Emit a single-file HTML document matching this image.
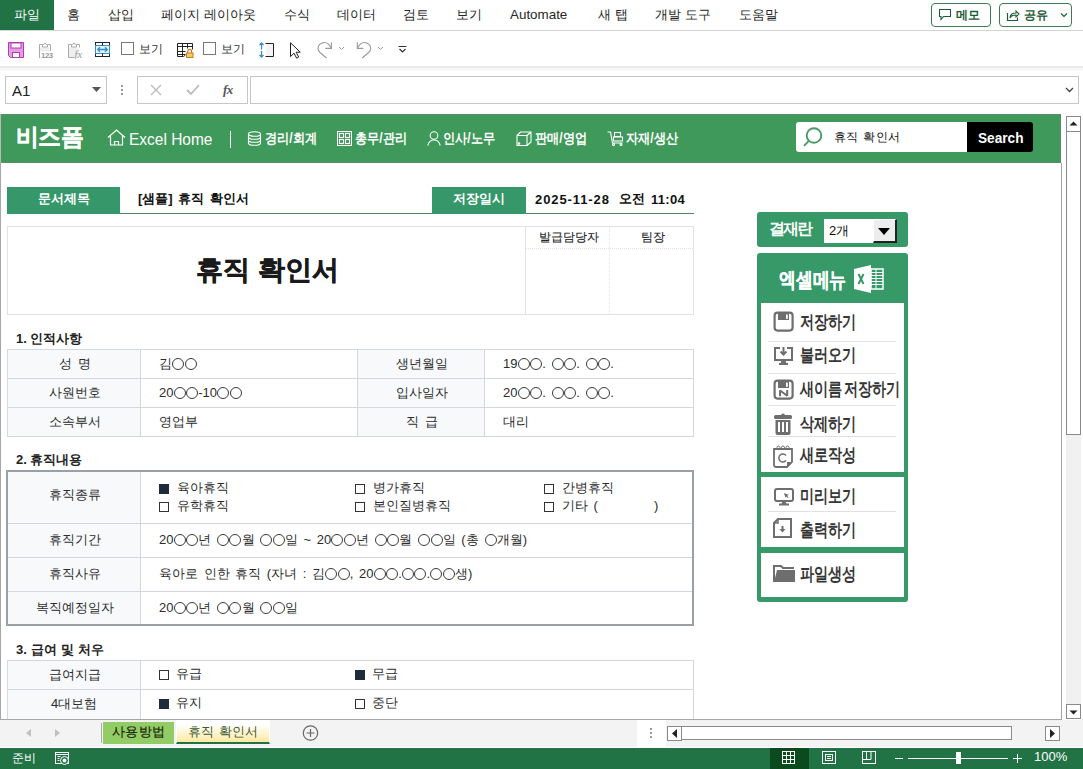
<!DOCTYPE html>
<html><head><meta charset="utf-8">
<style>
*{box-sizing:border-box;margin:0;padding:0}
html,body{width:1083px;height:769px;overflow:hidden;background:#fff;font-family:"Liberation Sans",sans-serif;color:#2b2b2b;position:relative}
.a{position:absolute;white-space:nowrap}
.tab{position:absolute;top:6px;font-size:13.4px;color:#262626;line-height:18px}
.t13{font-size:13px;line-height:16px;word-spacing:2px}
.cb{position:absolute;width:10px;height:10px;border:1px solid #333;background:#fff}
.cbf{position:absolute;width:10px;height:10px;background:#1f2a3a}
.hl{position:absolute;height:1px;background:#d4d8de}
.vl{position:absolute;width:1px;background:#d4d8de}
.lbl{position:absolute;background:#f7f9fb}
.menu{position:absolute;font-size:14px;font-weight:bold;color:#fff;line-height:16px;transform:scaleX(0.87);transform-origin:0 0}
.mi{position:absolute;left:800px;font-size:18px;font-weight:bold;color:#363636;line-height:20px;transform:scaleX(0.785);transform-origin:0 0}
.msep{position:absolute;left:768px;width:128px;height:1px;background:#e0e0e0}
.o{display:inline-block;width:12px;height:12px;border:1px solid #3a3a3a;border-radius:50%;margin:0 0.2px;vertical-align:-1.5px}
</style></head><body>
<!-- ribbon tabs -->
<div class="a" style="left:0;top:0;width:1083px;height:31px;background:#fff;border-bottom:1px solid #d4d4d4"></div>
<div class="a" style="left:0;top:0;width:54px;height:30px;background:#217346"></div>
<div class="tab" style="left:14px;color:#fff">파일</div>
<div class="tab" style="left:67px">홈</div>
<div class="tab" style="left:108px">삽입</div>
<div class="tab" style="left:161px">페이지 레이아웃</div>
<div class="tab" style="left:284px">수식</div>
<div class="tab" style="left:337px">데이터</div>
<div class="tab" style="left:403px">검토</div>
<div class="tab" style="left:456px">보기</div>
<div class="tab" style="left:510px">Automate</div>
<div class="tab" style="left:598px">새 탭</div>
<div class="tab" style="left:655px">개발 도구</div>
<div class="tab" style="left:739px">도움말</div>
<div class="a" style="left:931px;top:3px;width:60px;height:24px;border:1px solid #3c7a52;border-radius:4px"></div>
<div class="a" style="left:999px;top:3px;width:73px;height:24px;border:1px solid #3c7a52;border-radius:4px"></div>
<div class="a" style="left:956px;top:7px;font-size:12px;font-weight:bold;color:#1e5c36;line-height:16px;letter-spacing:0.3px">메모</div>
<div class="a" style="left:1024px;top:7px;font-size:12px;font-weight:bold;color:#1e5c36;line-height:16px;letter-spacing:0.3px">공유</div>
<svg class="a" style="left:939px;top:9px" width="13" height="12" viewBox="0 0 13 12"><path d="M0.5 0.5h11v7h-7l-2.5 3v-3h-1.5z" fill="none" stroke="#1e5c36" stroke-width="1.1"/></svg>
<svg class="a" style="left:1006px;top:8px" width="14" height="14" viewBox="0 0 14 14"><path d="M1.5 5v7.5h10v-3" fill="none" stroke="#1e5c36" stroke-width="1.2"/><path d="M4 10c0-4 3-5 6-5V3l3 3-3 3V7c-3 0-5 1-6 3z" fill="none" stroke="#1e5c36" stroke-width="1.1"/></svg>
<svg class="a" style="left:1060px;top:12px" width="8" height="6" viewBox="0 0 8 6"><path d="M1 1.5l3 3 3-3" fill="none" stroke="#1e5c36" stroke-width="1.2"/></svg>

<!-- QAT -->
<div class="a" style="left:0;top:66px;width:1083px;height:5px;background:linear-gradient(#e4e4e4,#f4f4f4 50%,#fcfcfc)"></div>
<svg class="a" style="left:8px;top:42px" width="16" height="16" viewBox="0 0 16 16"><path d="M0.5 0.5h15v15h-13l-2-2z" fill="#e39de4" stroke="#b23bb3"/><rect x="3" y="1" width="10" height="5" fill="#fff" stroke="#b23bb3"/><rect x="4.5" y="10.5" width="7" height="5" fill="#fff" stroke="#b23bb3"/></svg>
<svg class="a" style="left:38px;top:41px" width="16" height="18" viewBox="0 0 16 18"><rect x="2" y="6.5" width="9.5" height="4" fill="#eee"/><path d="M1.5 17V3.5h3M9.5 3.5h3V10" fill="none" stroke="#aaa"/><path d="M4.5 3.5v2.5h5V3.5H8.3a1.3 1.3 0 0 0-2.6 0z" fill="none" stroke="#aaa"/><text x="3" y="16.8" font-size="7.8" fill="#999" font-family="Liberation Sans" font-weight="bold" letter-spacing="-0.4">123</text></svg>
<svg class="a" style="left:67px;top:41px" width="17" height="18" viewBox="0 0 17 18"><path d="M2 6.5h9.5v10H2z" fill="#eee"/><path d="M1.5 16.5V3.5h3M9.5 3.5h3V6.5M1.5 16.5h6" fill="none" stroke="#aaa"/><path d="M4.5 3.5v2.5h5V3.5H8.3a1.3 1.3 0 0 0-2.6 0z" fill="none" stroke="#aaa"/><text x="7.5" y="16.5" font-size="10.5" font-style="italic" fill="#999" font-family="Liberation Serif">fx</text></svg>
<svg class="a" style="left:95px;top:42px" width="15" height="15" viewBox="0 0 15 15"><rect x="0.5" y="0.5" width="14" height="14" fill="#fff" stroke="#222"/><rect x="0.5" y="3.5" width="14" height="8" fill="#dff4fc" stroke="#3a8cc8"/><path d="M7.5 0.5v3M7.5 11.5v3" stroke="#222"/><path d="M3 7.5h9M5 5.3l-2.2 2.2 2.2 2.2M10 5.3l2.2 2.2-2.2 2.2" stroke="#3a8cc8" stroke-width="1.4" fill="none"/></svg>
<div class="cb" style="left:121px;top:42px;width:13px;height:13px;border-color:#777"></div>
<div class="a" style="left:139px;top:41px;font-size:12px;line-height:16px;color:#333;letter-spacing:0.3px">보기</div>
<svg class="a" style="left:177px;top:43px" width="17" height="15" viewBox="0 0 17 15"><path d="M0.5 13.5V0.5h15v6M0.5 3.5h15M0.5 8.5h8M0.5 11.5h8M0.5 13.5h6l2-1.5M5.5 0.5v13M10.5 0.5v5" fill="none" stroke="#222"/><path d="M10.8 10V8.3a1.9 1.9 0 0 1 3.8 0V10" fill="none" stroke="#c97f1e" stroke-width="1.2"/><rect x="9.5" y="10" width="6.5" height="4.5" fill="#f8c86a" stroke="#c97f1e"/></svg>
<div class="cb" style="left:203px;top:42px;width:13px;height:13px;border-color:#777"></div>
<div class="a" style="left:221px;top:41px;font-size:12px;line-height:16px;color:#333;letter-spacing:0.3px">보기</div>
<svg class="a" style="left:259px;top:42px" width="16" height="16" viewBox="0 0 16 16"><rect x="7" y="2" width="7" height="12" fill="#f4f4f4"/><path d="M6.5 1.5h8v13h-8" fill="none" stroke="#222"/><path d="M2.5 1v6.5M2.5 9v6M0.5 3l2-2 2 2M0.5 13l2 2 2-2" fill="none" stroke="#3a8cc8" stroke-width="1.3"/></svg>
<svg class="a" style="left:289px;top:42px" width="13" height="17" viewBox="0 0 13 17"><path d="M1.5 0.8V14.6L5 11.2l2.6 5 2.1-1.1-2.5-4.9h4.1z" fill="#fff" stroke="#222" stroke-linejoin="miter"/></svg>
<svg class="a" style="left:317px;top:41px" width="17" height="18" viewBox="0 0 17 18" fill="none" stroke="#9a9a9a" stroke-width="1.1"><path d="M14.4 1.3v6.1H8.3"/><path d="M14.4 7.4C12.5 3.5 10 1.5 7.5 1.5 4 1.5 1 4 1 7.5c0 1.5 0.8 2.8 2 4l6.5 5.5"/></svg>
<svg class="a" style="left:338px;top:46px" width="7" height="5" viewBox="0 0 7 5"><path d="M1 1l2.5 2.5L6 1" fill="none" stroke="#999"/></svg>
<svg class="a" style="left:356px;top:41px" width="17" height="18" viewBox="0 0 17 18" fill="none" stroke="#9a9a9a" stroke-width="1.1"><path d="M1.3 1.3v6.1h6.1"/><path d="M1.3 7.4C3.2 3.5 5.7 1.5 8.2 1.5c3.5 0 6.5 2.5 6.5 6 0 1.5-0.8 2.8-2 4L6.2 17"/></svg>
<svg class="a" style="left:377px;top:46px" width="7" height="5" viewBox="0 0 7 5"><path d="M1 1l2.5 2.5L6 1" fill="none" stroke="#999"/></svg>
<svg class="a" style="left:398px;top:46px" width="9" height="7" viewBox="0 0 9 7"><path d="M0.5 0.5h8M1.5 3l3 3 3-3" fill="none" stroke="#333" stroke-width="1.2"/></svg>

<!-- formula bar -->
<div class="a" style="left:5px;top:76px;width:102px;height:28px;border:1px solid #c6c6c6;background:#fff"></div>
<div class="a" style="left:12px;top:82px;font-size:15px;line-height:18px;color:#222">A1</div>
<svg class="a" style="left:92px;top:87px" width="9" height="5" viewBox="0 0 9 5"><path d="M0 0h9L4.5 5z" fill="#555"/></svg>
<div class="a" style="left:121px;top:85px;width:2px;height:2px;background:#999"></div>
<div class="a" style="left:121px;top:89px;width:2px;height:2px;background:#999"></div>
<div class="a" style="left:121px;top:93px;width:2px;height:2px;background:#999"></div>
<div class="a" style="left:137px;top:76px;width:111px;height:28px;border:1px solid #c6c6c6;background:#fff"></div>
<svg class="a" style="left:150px;top:84px" width="12" height="12" viewBox="0 0 12 12"><path d="M1 1l10 10M11 1L1 11" stroke="#bbb" stroke-width="1.3"/></svg>
<svg class="a" style="left:186px;top:84px" width="14" height="12" viewBox="0 0 14 12"><path d="M1 6l4 4 8-9" fill="none" stroke="#bbb" stroke-width="1.8"/></svg>
<div class="a" style="left:223px;top:82px;font-size:13px;font-style:italic;font-weight:bold;font-family:'Liberation Serif',serif;color:#555;line-height:16px;letter-spacing:-0.5px">fx</div>
<div class="a" style="left:250px;top:76px;width:829px;height:28px;border:1px solid #c6c6c6;background:#fff"></div>
<svg class="a" style="left:1065px;top:87px" width="9" height="6" viewBox="0 0 9 6"><path d="M1 1l3.5 3.5L8 1" fill="none" stroke="#444" stroke-width="1.3"/></svg>

<!-- sheet area -->
<div class="a" style="left:0;top:163px;width:1px;height:557px;background:#a6a6a6"></div>
<div class="a" style="left:1061px;top:163px;width:1px;height:557px;background:#a6a6a6"></div>


<!-- header band -->
<div class="a" style="left:1px;top:114px;width:1060px;height:49px;background:#3f995b;border:1px solid #5a8c68"></div><div class="a" style="left:0;top:114px;width:1px;height:49px;background:#9ec8a8"></div>
<div class="a" style="left:16px;top:120px;font-size:24px;font-weight:bold;color:#fff;line-height:34px;letter-spacing:-0.5px;-webkit-text-stroke:0.4px #fff;transform:scaleX(0.95);transform-origin:0 0">비즈폼</div>
<svg class="a" style="left:107px;top:129px" width="19" height="17" viewBox="0 0 19 17" fill="none" stroke="#fff" stroke-width="1.2"><path d="M1 8.5L9.5 1 18 8.5"/><path d="M3.5 6.5v9.5h12V6.5"/><path d="M7.5 16v-3.5h4V16"/></svg>
<div class="a" style="left:129px;top:130px;font-size:17px;color:#fff;line-height:20px;transform:scaleX(0.91);transform-origin:0 0">Excel Home</div>
<div class="a" style="left:230px;top:131px;width:1px;height:17px;background:#fff"></div>
<svg class="a" style="left:247px;top:131px" width="15" height="15" viewBox="0 0 15 15" fill="none" stroke="#fff" stroke-width="1.1"><ellipse cx="7.5" cy="3" rx="6" ry="2.3"/><path d="M1.5 3v9c0 1.3 2.7 2.3 6 2.3s6-1 6-2.3V3M1.5 6c0 1.3 2.7 2.3 6 2.3s6-1 6-2.3M1.5 9c0 1.3 2.7 2.3 6 2.3s6-1 6-2.3"/></svg>
<div class="menu" style="left:265px;top:130px">경리/회계</div>
<svg class="a" style="left:337px;top:131px" width="15" height="15" viewBox="0 0 15 15" fill="none" stroke="#fff" stroke-width="1.1"><rect x="0.5" y="0.5" width="14" height="14"/><rect x="2.5" y="2.5" width="4" height="4"/><rect x="8.5" y="2.5" width="4" height="4"/><rect x="2.5" y="8.5" width="4" height="4"/><rect x="8.5" y="8.5" width="4" height="4"/></svg>
<div class="menu" style="left:355px;top:130px">총무/관리</div>
<svg class="a" style="left:427px;top:131px" width="14" height="15" viewBox="0 0 14 15" fill="none" stroke="#fff" stroke-width="1.1"><circle cx="7" cy="4.5" r="3.8"/><path d="M0.8 14.5c1-4 3.5-5.5 6.2-5.5s5.2 1.5 6.2 5.5"/></svg>
<div class="menu" style="left:443px;top:130px">인사/노무</div>
<svg class="a" style="left:516px;top:131px" width="16" height="15" viewBox="0 0 16 15" fill="none" stroke="#fff" stroke-width="1.1"><path d="M1 4.5h10v10H1zM1 4.5L4.5 1h10.5v10L11 14.5M11 4.5L15 1"/><circle cx="3" cy="12.5" r="0.8" fill="#fff"/></svg>
<div class="menu" style="left:535px;top:130px">판매/영업</div>
<svg class="a" style="left:607px;top:131px" width="17" height="15" viewBox="0 0 17 15" fill="none" stroke="#fff" stroke-width="1.1"><path d="M0.5 1h3l2 11h10"/><rect x="7.5" y="1.5" width="6" height="4"/><rect x="6.5" y="6" width="9" height="4"/><circle cx="6.5" cy="13.5" r="1"/><circle cx="14" cy="13.5" r="1"/></svg>
<div class="menu" style="left:626px;top:130px">자재/생산</div>
<div class="a" style="left:796px;top:122px;width:172px;height:30px;background:#fff;border-radius:3px 0 0 3px"></div>
<div class="a" style="left:967px;top:122px;width:66px;height:30px;background:#000;border-radius:0 3px 3px 0"></div>
<div class="a" style="left:978px;top:129px;font-size:15px;font-weight:bold;color:#fff;line-height:18px;transform:scaleX(0.91);transform-origin:0 0">Search</div>
<svg class="a" style="left:803px;top:127px" width="21" height="21" viewBox="0 0 21 21" fill="none" stroke="#4a9a68" stroke-width="1.9"><circle cx="11" cy="8.5" r="7.3"/><path d="M5.8 13.8L1 18.8"/></svg>
<div class="a" style="left:834px;top:129px;font-size:12px;color:#111;line-height:16px;letter-spacing:0.2px;word-spacing:1.5px">휴직 확인서</div>

<!-- scrollbars -->
<div class="a" style="left:1066px;top:116px;width:15px;height:16px;border:1px solid #8a8a8a;background:#fff"></div>
<svg class="a" style="left:1069px;top:121px" width="9" height="5" viewBox="0 0 9 5"><path d="M0.5 4.5h8L4.5 0.5z" fill="#222"/></svg>
<div class="a" style="left:1066px;top:131px;width:15px;height:304px;border:1px solid #8a8a8a;background:#fff"></div>
<div class="a" style="left:1066px;top:435px;width:15px;height:269px;background:#f1f1f1"></div>
<div class="a" style="left:1066px;top:704px;width:15px;height:15px;border:1px solid #8a8a8a;background:#fff"></div>
<svg class="a" style="left:1069px;top:710px" width="9" height="5" viewBox="0 0 9 5"><path d="M0.5 0.5h8L4.5 4.5z" fill="#222"/></svg>

<!-- sheet tab bar -->
<div class="a" style="left:0;top:720px;width:1083px;height:27px;background:#f3f3f3"></div>
<svg class="a" style="left:26px;top:729px" width="6" height="8" viewBox="0 0 6 8"><path d="M5 0v8L0 4z" fill="#c0c0c0"/></svg>
<svg class="a" style="left:55px;top:729px" width="6" height="8" viewBox="0 0 6 8"><path d="M0 0v8l5-4z" fill="#c0c0c0"/></svg>
<div class="a" style="left:101px;top:723px;width:1px;height:20px;background:#aaa"></div>
<div class="a" style="left:103px;top:722px;width:71px;height:22px;background:#92cc64"></div>
<div class="a" style="left:112px;top:724px;font-size:13px;color:#1a2410;line-height:16px;letter-spacing:0.3px;-webkit-text-stroke:0.2px #1a2410">사용방법</div>
<div class="a" style="left:176px;top:719px;width:94px;height:25px;background:linear-gradient(#fff 20%,#ffe9a0);border:1px solid #fff;border-bottom:2px solid #217346"></div>
<div class="a" style="left:188px;top:724px;font-size:13.3px;color:#3a5a32;line-height:16px;word-spacing:1px">휴직 확인서</div>
<svg class="a" style="left:302px;top:725px" width="17" height="16" viewBox="0 0 17 16" fill="none" stroke="#666" stroke-width="1.2"><circle cx="8.5" cy="8" r="7.2"/><path d="M8.5 4v8M4.5 8h8"/></svg>
<div class="a" style="left:637px;top:720px;width:29px;height:27px;background:#fff"></div>
<div class="a" style="left:650px;top:728px;width:2px;height:2px;background:#999"></div>
<div class="a" style="left:650px;top:732px;width:2px;height:2px;background:#999"></div>
<div class="a" style="left:650px;top:736px;width:2px;height:2px;background:#999"></div>
<div class="a" style="left:667px;top:726px;width:15px;height:15px;border:1px solid #8a8a8a;background:#fff"></div>
<svg class="a" style="left:672px;top:729px" width="5" height="9" viewBox="0 0 5 9"><path d="M5 0v9L0 4.5z" fill="#222"/></svg>
<div class="a" style="left:681px;top:726px;width:331px;height:14px;border:1px solid #8a8a8a;background:#fff"></div>
<div class="a" style="left:1045px;top:726px;width:15px;height:15px;border:1px solid #8a8a8a;background:#fff"></div>
<svg class="a" style="left:1050px;top:729px" width="5" height="9" viewBox="0 0 5 9"><path d="M0 0v9l5-4.5z" fill="#222"/></svg>

<!-- status bar -->
<div class="a" style="left:0;top:748px;width:1083px;height:21px;background:#217346"></div>
<div class="a" style="left:12px;top:750px;font-size:11.5px;color:#fff;line-height:16px">준비</div>
<svg class="a" style="left:55px;top:752px" width="15" height="14" viewBox="0 0 15 14" fill="none" stroke="#fff"><rect x="0.5" y="0.5" width="13" height="11"/><path d="M0.5 2.5h13M2.5 4.5h3M2.5 6.5h2M2.5 8.5h2"/><circle cx="9.5" cy="8.5" r="4" fill="#217346"/><circle cx="9.5" cy="8.5" r="1.9" fill="#fff" stroke="none"/></svg>
<div class="a" style="left:770px;top:748px;width:39px;height:21px;background:#0a4a1c"></div>
<svg class="a" style="left:782px;top:751px" width="13" height="13" viewBox="0 0 13 13" fill="none" stroke="#fff"><rect x="0.5" y="0.5" width="12" height="12"/><path d="M4.5 0.5v12M8.5 0.5v12M0.5 4.5h12M0.5 8.5h12"/></svg>
<svg class="a" style="left:822px;top:751px" width="14" height="13" viewBox="0 0 14 13" fill="none" stroke="#fff"><rect x="0.5" y="0.5" width="13" height="12"/><rect x="3.5" y="3.5" width="7" height="6"/><path d="M5 5.5h4M5 7.5h4"/></svg>
<svg class="a" style="left:862px;top:751px" width="14" height="13" viewBox="0 0 14 13" fill="none" stroke="#fff"><rect x="0.5" y="0.5" width="13" height="12"/><path d="M0.5 8.5h8.5v-8M4.5 0.5v8"/></svg>
<div class="a" style="left:895px;top:758px;width:8px;height:1px;background:#fff"></div>
<div class="a" style="left:908px;top:758px;width:100px;height:1px;background:#fff"></div>
<div class="a" style="left:956px;top:752px;width:5px;height:12px;background:#fff"></div>
<div class="a" style="left:1013px;top:758px;width:9px;height:1px;background:#fff"></div>
<div class="a" style="left:1017px;top:754px;width:1px;height:9px;background:#fff"></div>
<div class="a" style="left:1034px;top:749px;font-size:13px;color:#fff;line-height:16px">100%</div>

<!-- DOC -->
<div class="a" style="left:7px;top:187px;width:113px;height:27px;background:#36976a"></div>
<div class="a t13" style="left:38px;top:191px;color:#fff;font-weight:bold">문서제목</div>
<div class="a" style="left:120px;top:213px;width:574px;height:1px;background:#4f8a68"></div>
<div class="a t13" style="left:138px;top:191px;font-weight:bold;color:#111">[샘플] 휴직 확인서</div>
<div class="a" style="left:432px;top:187px;width:94px;height:27px;background:#36976a"></div>
<div class="a t13" style="left:453px;top:191px;color:#fff;font-weight:bold">저장일시</div>
<div class="a t13" style="left:535px;top:192px;font-weight:bold;color:#111;letter-spacing:0.9px">2025-11-28</div><div class="a t13" style="left:619px;top:191px;font-weight:bold;color:#111">오전</div><div class="a t13" style="left:651px;top:192px;font-weight:bold;color:#111;letter-spacing:0.3px">11:04</div>

<div class="a" style="left:7px;top:226px;width:687px;height:89px;border:1px solid #e2e2e2"></div>
<div class="a" style="left:525px;top:226px;width:1px;height:89px;background:#e2e2e2"></div>
<div class="a" style="left:609px;top:227px;height:87px;border-left:1px dotted #e2e2e2"></div>
<div class="a" style="left:526px;top:248px;width:167px;border-top:1px dotted #e2e2e2"></div>
<div class="a" style="left:539px;top:229px;font-size:11.5px;line-height:16px;color:#222;-webkit-text-stroke:0.1px #222">발급담당자</div>
<div class="a" style="left:641px;top:229px;font-size:11.5px;line-height:16px;color:#222;-webkit-text-stroke:0.1px #222">팀장</div>
<div class="a" style="left:196px;top:253px;font-size:27px;line-height:34px;font-weight:bold;color:#1a1a1a;-webkit-text-stroke:0.5px #1a1a1a">휴직 확인서</div>

<div class="a t13" style="left:16px;top:331px;font-weight:bold;color:#222;word-spacing:0">1. 인적사항</div>
<div class="lbl" style="left:7px;top:349px;width:134px;height:88px"></div>
<div class="lbl" style="left:357px;top:349px;width:128px;height:88px"></div>
<div class="a" style="left:7px;top:349px;width:687px;height:88px;border:1px solid #d4d8de"></div>
<div class="hl" style="left:7px;top:378px;width:687px"></div>
<div class="hl" style="left:7px;top:407px;width:687px"></div>
<div class="vl" style="left:140px;top:349px;height:88px"></div>
<div class="vl" style="left:357px;top:349px;height:88px"></div>
<div class="vl" style="left:484px;top:349px;height:88px"></div>
<div class="a t13" style="left:59px;top:356px">성&nbsp;명</div>
<div class="a t13" style="left:49px;top:385px">사원번호</div>
<div class="a t13" style="left:49px;top:414px">소속부서</div>
<div class="a t13" style="left:159px;top:356px">김<i class="o"></i><i class="o"></i></div>
<div class="a t13" style="left:159px;top:385px">20<i class="o"></i><i class="o"></i>-10<i class="o"></i><i class="o"></i></div>
<div class="a t13" style="left:159px;top:414px">영업부</div>
<div class="a t13" style="left:396px;top:356px">생년월일</div>
<div class="a t13" style="left:396px;top:385px">입사일자</div>
<div class="a t13" style="left:406px;top:414px">직&nbsp;급</div>
<div class="a t13" style="left:503px;top:356px">19<i class="o"></i><i class="o"></i>. <i class="o"></i><i class="o"></i>. <i class="o"></i><i class="o"></i>.</div>
<div class="a t13" style="left:503px;top:385px">20<i class="o"></i><i class="o"></i>. <i class="o"></i><i class="o"></i>. <i class="o"></i><i class="o"></i>.</div>
<div class="a t13" style="left:503px;top:414px">대리</div>

<div class="a t13" style="left:16px;top:452px;font-weight:bold;color:#222;word-spacing:0">2. 휴직내용</div>
<div class="lbl" style="left:7px;top:471px;width:134px;height:154px"></div>
<div class="hl" style="left:7px;top:523px;width:687px"></div>
<div class="hl" style="left:7px;top:557px;width:687px"></div>
<div class="hl" style="left:7px;top:591px;width:687px"></div>
<div class="vl" style="left:140px;top:471px;height:154px"></div>
<div class="a" style="left:6px;top:470px;width:688px;height:156px;border:2px solid #9aa0aa"></div>
<div class="a t13" style="left:49px;top:487px">휴직종류</div>
<div class="a t13" style="left:49px;top:532px">휴직기간</div>
<div class="a t13" style="left:49px;top:566px">휴직사유</div>
<div class="a t13" style="left:36px;top:600px">복직예정일자</div>
<div class="cbf" style="left:159px;top:484px"></div><div class="a t13" style="left:177px;top:480px">육아휴직</div>
<div class="cb" style="left:159px;top:502px"></div><div class="a t13" style="left:177px;top:498px">유학휴직</div>
<div class="cb" style="left:355px;top:484px"></div><div class="a t13" style="left:373px;top:480px">병가휴직</div>
<div class="cb" style="left:355px;top:502px"></div><div class="a t13" style="left:373px;top:498px">본인질병휴직</div>
<div class="cb" style="left:544px;top:484px"></div><div class="a t13" style="left:562px;top:480px">간병휴직</div>
<div class="cb" style="left:544px;top:502px"></div><div class="a t13" style="left:562px;top:498px">기타 (</div>
<div class="a t13" style="left:654px;top:498px">)</div>
<div class="a t13" style="left:159px;top:532px">20<i class="o"></i><i class="o"></i>년 <i class="o"></i><i class="o"></i>월 <i class="o"></i><i class="o"></i>일 ~ 20<i class="o"></i><i class="o"></i>년 <i class="o"></i><i class="o"></i>월 <i class="o"></i><i class="o"></i>일 (총 <i class="o"></i>개월)</div>
<div class="a t13" style="left:159px;top:566px">육아로 인한 휴직 (자녀 : 김<i class="o"></i><i class="o"></i>, 20<i class="o"></i><i class="o"></i>.<i class="o"></i><i class="o"></i>.<i class="o"></i><i class="o"></i>생)</div>
<div class="a t13" style="left:159px;top:600px">20<i class="o"></i><i class="o"></i>년 <i class="o"></i><i class="o"></i>월 <i class="o"></i><i class="o"></i>일</div>

<div class="a t13" style="left:16px;top:642px;font-weight:bold;color:#222;word-spacing:0.5px">3. 급여 및 처우</div>
<div class="lbl" style="left:7px;top:660px;width:134px;height:59px"></div>
<div class="a" style="left:7px;top:660px;width:687px;height:60px;border:1px solid #d4d8de"></div>
<div class="hl" style="left:7px;top:689px;width:687px"></div>
<div class="vl" style="left:140px;top:660px;height:59px"></div>
<div class="a t13" style="left:49px;top:667px">급여지급</div>
<div class="a t13" style="left:51px;top:696px">4대보험</div>
<div class="cb" style="left:159px;top:670px"></div><div class="a t13" style="left:176px;top:666px">유급</div>
<div class="cbf" style="left:355px;top:670px"></div><div class="a t13" style="left:372px;top:666px">무급</div>
<div class="cbf" style="left:159px;top:699px"></div><div class="a t13" style="left:176px;top:695px">유지</div>
<div class="cb" style="left:355px;top:699px"></div><div class="a t13" style="left:372px;top:695px">중단</div>

<!-- right panel -->
<div class="a" style="left:757px;top:212px;width:151px;height:35px;background:#379868;border-radius:3px"></div>
<div class="a" style="left:769px;top:219px;font-size:16px;line-height:20px;font-weight:bold;color:#fff;letter-spacing:-2.2px">결재란</div>
<div class="a" style="left:824px;top:219px;width:73px;height:24px;background:#fff"></div>
<div class="a" style="left:829px;top:223px;font-size:13px;line-height:16px;color:#111">2개</div>
<div class="a" style="left:873px;top:219px;width:24px;height:24px;background:#ededed;border-style:solid;border-width:1px 2px 2px 1px;border-color:#fff #222 #222 #fff"></div>
<svg class="a" style="left:878px;top:228px" width="12" height="7" viewBox="0 0 12 7"><path d="M0 0h12L6 7z" fill="#000"/></svg>

<div class="a" style="left:757px;top:253px;width:151px;height:349px;background:#379868;border-radius:3px"></div>
<div class="a" style="left:761px;top:303px;width:143px;height:169px;background:#fff"></div>
<div class="a" style="left:761px;top:477px;width:143px;height:70px;background:#fff"></div>
<div class="a" style="left:761px;top:553px;width:143px;height:44px;background:#fff"></div>
<div class="a" style="left:779px;top:267px;font-size:21px;line-height:26px;font-weight:bold;color:#fff;transform:scaleX(0.8);transform-origin:0 0;-webkit-text-stroke:0.3px #fff">엑셀메뉴</div>
<svg class="a" style="left:854px;top:265px" width="30" height="28" viewBox="0 0 30 28"><path d="M0 4L17 0v28L0 24z" fill="#fff"/><rect x="17" y="4" width="12" height="20" fill="none" stroke="#fff" stroke-width="1.5"/><path d="M17 7.5h12M17 10.5h12M17 13.5h12M17 16.5h12M17 19.5h12M22 4v20" stroke="#fff" stroke-width="1"/><path d="M4.5 9l5 10M9.5 9l-5 10" stroke="#379868" stroke-width="2"/></svg>
<div class="msep" style="top:341px"></div>
<div class="msep" style="top:373px"></div>
<div class="msep" style="top:405px"></div>
<div class="msep" style="top:436px"></div>
<div class="msep" style="top:511px"></div>
<div class="mi" style="top:312px">저장하기</div>
<div class="mi" style="top:345px">불러오기</div>
<div class="mi" style="top:379px;word-spacing:-3.5px">새이름 저장하기</div>
<div class="mi" style="top:414px">삭제하기</div>
<div class="mi" style="top:445px">새로작성</div>
<div class="mi" style="top:486px">미리보기</div>
<div class="mi" style="top:520px">출력하기</div>
<div class="mi" style="top:564px">파일생성</div>

<svg class="a" style="left:773px;top:311px" width="21" height="21" viewBox="0 0 21 21"><rect x="1.6" y="1.6" width="18" height="18" rx="3" fill="#fff" stroke="#6e6e6e" stroke-width="2.2"/><rect x="5" y="1" width="11" height="8" fill="#6e6e6e"/><rect x="13" y="3.5" width="1.8" height="4.4" fill="#fff"/></svg>
<svg class="a" style="left:773px;top:346px" width="21" height="20" viewBox="0 0 21 20"><path d="M7 2H2v12h17V2h-5" fill="none" stroke="#6e6e6e" stroke-width="2"/><path d="M10.5 1v7M7.5 5.5l3 3 3-3" fill="none" stroke="#6e6e6e" stroke-width="2"/><path d="M8.5 14.5h4l1 3h-6z" fill="#6e6e6e"/><rect x="6" y="17" width="9" height="2" fill="#6e6e6e"/></svg>
<svg class="a" style="left:773px;top:379px" width="21" height="21" viewBox="0 0 21 21"><rect x="1.6" y="1.6" width="18" height="18" rx="3" fill="#fff" stroke="#6e6e6e" stroke-width="2.2"/><rect x="5" y="1" width="11" height="8" fill="#6e6e6e"/><rect x="13" y="3.5" width="1.8" height="4.4" fill="#fff"/><path d="M7 17.2V11.5l7.2 5.2V11" fill="none" stroke="#6e6e6e" stroke-width="2" stroke-linejoin="bevel"/></svg>
<svg class="a" style="left:774px;top:413px" width="18" height="22" viewBox="0 0 18 22"><path d="M7 2.5a2 2 0 0 1 4 0" fill="#6e6e6e"/><rect x="0" y="2" width="18" height="4" rx="1.5" fill="#6e6e6e"/><path d="M1.5 7h15v13a2 2 0 0 1-2 2h-11a2 2 0 0 1-2-2z" fill="#6e6e6e"/><rect x="4" y="9" width="2" height="10" fill="#fff"/><rect x="8" y="9" width="2" height="10" fill="#fff"/><rect x="12" y="9" width="2" height="10" fill="#fff"/></svg>
<svg class="a" style="left:773px;top:445px" width="20" height="23" viewBox="0 0 20 23"><path d="M1 4h18v13l-5 5H3a2 2 0 0 1-2-2z" fill="#fff" stroke="#6e6e6e" stroke-width="1.8"/><path d="M19 17h-5v5z" fill="#6e6e6e"/><circle cx="5.5" cy="2.5" r="1.5" fill="none" stroke="#6e6e6e"/><circle cx="10" cy="2.5" r="1.5" fill="none" stroke="#6e6e6e"/><circle cx="14.5" cy="2.5" r="1.5" fill="none" stroke="#6e6e6e"/><path d="M13 10.5a4 4 0 1 0 0 5" fill="none" stroke="#6e6e6e" stroke-width="1.5"/></svg>
<svg class="a" style="left:774px;top:488px" width="20" height="18" viewBox="0 0 20 18"><rect x="1" y="1" width="18" height="12" rx="2" fill="#fff" stroke="#6e6e6e" stroke-width="2"/><path d="M8.5 13.5h3l1 2.5h-5z" fill="#6e6e6e"/><rect x="5" y="15.5" width="10" height="2" fill="#6e6e6e"/><path d="M10 5l5 2-2 .8 1.5 1.5-.8.8-1.5-1.5L11.5 10z" fill="#6e6e6e"/></svg>
<svg class="a" style="left:773px;top:518px" width="19" height="20" viewBox="0 0 19 20"><path d="M5 1h13v18H1V5z" fill="#fff" stroke="#6e6e6e" stroke-width="2"/><path d="M1 5h4V1" fill="none" stroke="#6e6e6e" stroke-width="1.5"/><rect x="8.5" y="8" width="2" height="3" fill="#6e6e6e"/><path d="M6.5 11h6l-3 3.5z" fill="#6e6e6e"/></svg>
<svg class="a" style="left:773px;top:564px" width="23" height="19" viewBox="0 0 23 19"><path d="M1 18V2h7l2 2h11" fill="none" stroke="#6e6e6e" stroke-width="2"/><path d="M4 6h18v12H1z" fill="#6e6e6e"/></svg>

<div class="a" style="left:0;top:719px;width:1062px;height:1px;background:#a6a6a6"></div>
</body></html>
